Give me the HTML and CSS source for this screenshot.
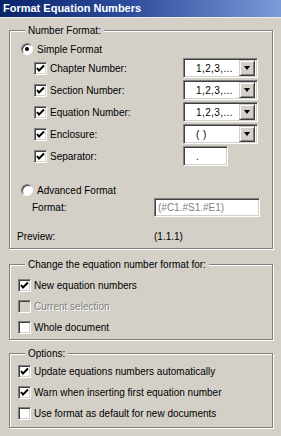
FILE: index.html
```html
<!DOCTYPE html>
<html lang="en">
<head>
    <meta charset="UTF-8">
    <title>Format Equation Numbers</title>
    <link rel="stylesheet" href="styles.css">
</head>
<body>
    <div class="dialog">
        <div class="titlebar">Format Equation Numbers</div>

        <fieldset class="group grp-format">
            <legend>Number Format:</legend>
            <div class="row row-simple">
                <span class="radio on"></span>
                <span class="lbl">Simple Format</span>
            </div>

            <div class="row part">
                <span class="chk"><svg viewBox="0 0 11 11"><polyline points="2,5 4,7.5 9,2.5"/></svg></span>
                <span class="lbl">Chapter Number:</span>
                <div class="combo"><span class="val">1,2,3,...</span><span class="drop"><i></i></span></div>
            </div>
            <div class="row part">
                <span class="chk"><svg viewBox="0 0 11 11"><polyline points="2,5 4,7.5 9,2.5"/></svg></span>
                <span class="lbl">Section Number:</span>
                <div class="combo"><span class="val">1,2,3,...</span><span class="drop"><i></i></span></div>
            </div>
            <div class="row part">
                <span class="chk"><svg viewBox="0 0 11 11"><polyline points="2,5 4,7.5 9,2.5"/></svg></span>
                <span class="lbl">Equation Number:</span>
                <div class="combo"><span class="val">1,2,3,...</span><span class="drop"><i></i></span></div>
            </div>
            <div class="row part">
                <span class="chk"><svg viewBox="0 0 11 11"><polyline points="2,5 4,7.5 9,2.5"/></svg></span>
                <span class="lbl">Enclosure:</span>
                <div class="combo"><span class="val">( )</span><span class="drop"><i></i></span></div>
            </div>
            <div class="row part">
                <span class="chk"><svg viewBox="0 0 11 11"><polyline points="2,5 4,7.5 9,2.5"/></svg></span>
                <span class="lbl">Separator:</span>
                <div class="field sep">.</div>
            </div>

            <div class="row row-adv">
                <span class="radio"></span>
                <span class="lbl">Advanced Format</span>
            </div>
            <div class="row row-fmt">
                <span class="lbl">Format:</span>
                <div class="field adv">(#C1.#S1.#E1)</div>
            </div>
            <div class="row row-prev">
                <span class="lbl">Preview:</span>
                <span class="prev">(1.1.1)</span>
            </div>
        </fieldset>

        <fieldset class="group grp-apply">
            <legend>Change the equation number format for:</legend>
            <div class="row opt">
                <span class="chk"><svg viewBox="0 0 11 11"><polyline points="2,5 4,7.5 9,2.5"/></svg></span>
                <span class="lbl">New equation numbers</span>
            </div>
            <div class="row opt">
                <span class="chk off"></span>
                <span class="lbl dim">Current selection</span>
            </div>
            <div class="row opt">
                <span class="chk"></span>
                <span class="lbl">Whole document</span>
            </div>
        </fieldset>

        <fieldset class="group grp-opts">
            <legend>Options:</legend>
            <div class="row opt">
                <span class="chk"><svg viewBox="0 0 11 11"><polyline points="2,5 4,7.5 9,2.5"/></svg></span>
                <span class="lbl">Update equations numbers automatically</span>
            </div>
            <div class="row opt">
                <span class="chk"><svg viewBox="0 0 11 11"><polyline points="2,5 4,7.5 9,2.5"/></svg></span>
                <span class="lbl">Warn when inserting first equation number</span>
            </div>
            <div class="row opt">
                <span class="chk"></span>
                <span class="lbl">Use format as default for new documents</span>
            </div>
        </fieldset>
    </div>
</body>
</html>
```

FILE: styles.css
```css
*{
    margin: 0;
    padding: 0;
    box-sizing: border-box;
}
body{
    background: #d4d0c8;
    font-family: "Liberation Sans", Arial, sans-serif;
    font-size: 10px;
    color: #000;
}
.dialog{
    width: 281px;
    height: 436px;
    background: #d4d0c8;
}
.titlebar{
    height: 18px;
    line-height: 17px;
    padding-left: 3px;
    color: #fff;
    font-weight: bold;
    font-size: 11px;
    background: linear-gradient(to right, #0a246a, #2c4c9c 45%, #7a9ad8);
    border-bottom: 1px solid #eeece6;
}

/* group boxes */
.group{
    margin: 6px 9px 0 9px;
    width: 264px;
    border: 1px solid #808080;
    box-shadow: 1px 1px 0 #fff, inset 1px 1px 0 #fff;
    padding: 0 0 0 7px;
}
.group legend{
    margin-left: 8px;
    padding: 0 3px;
    line-height: 13px;
    font-size: 10px;
    background: #d4d0c8;
}
.grp-format{
    height: 225px;
    margin-top: 6px;
}
.grp-apply{
    height: 82px;
    margin-top: 9px;
    padding-top: 4px;
}
.grp-opts{
    height: 81px;
    margin-top: 7px;
    padding-top: 1px;
}

.row{
    display: flex;
    align-items: center;
}
.row-simple{
    height: 18px;
    margin-top: 3px;
    padding-left: 4px;
}
.part{
    height: 20px;
    margin-top: 2px;
    padding-left: 17px;
}
.row-simple + .part{
    margin-top: 0;
}
.part .lbl{
    width: 133px;
}
.row-adv{
    height: 14px;
    margin-top: 17px;
    padding-left: 4px;
}
.row-fmt{
    height: 19px;
    margin-top: 1px;
    padding-left: 15px;
}
.row-fmt .lbl{
    width: 122px;
}
.row-prev{
    height: 14px;
    margin-top: 12px;
}
.row-prev .lbl{
    width: 137px;
}
.opt{
    height: 21px;
    padding-left: 1px;
}

/* controls */
.radio{
    width: 12px;
    height: 12px;
    border-radius: 50%;
    background: #fff;
    border: 1px solid;
    border-color: #808080 #fff #fff #808080;
    box-shadow: inset 1px 1px 0 #404040;
    margin-right: 4px;
    display: flex;
    align-items: center;
    justify-content: center;
}
.radio.on::after{
    content: "";
    width: 4px;
    height: 4px;
    border-radius: 50%;
    background: #000;
}
.chk{
    width: 13px;
    height: 13px;
    flex: none;
    background: #fff;
    border: 1px solid;
    border-color: #808080 #fff #fff #808080;
    box-shadow: inset 1px 1px 0 #404040, inset -1px -1px 0 #d4d0c8;
    margin-right: 3px;
}
.chk.off{
    background: #d4d0c8;
}
.chk svg{
    display: block;
    width: 11px;
    height: 11px;
    fill: none;
    stroke: #000;
    stroke-width: 2;
}
.dim{
    color: #808080;
    text-shadow: 1px 1px 0 #fff;
}
.combo, .field{
    height: 20px;
    background: #fff;
    border: 1px solid;
    border-color: #808080 #fff #fff #808080;
    box-shadow: inset 1px 1px 0 #404040, inset -1px -1px 0 #d4d0c8;
    display: flex;
    align-items: center;
}
.combo{
    width: 75px;
    padding: 2px;
}
.combo .val{
    flex: 1;
    padding-left: 10px;
    letter-spacing: 0.4px;
}
.drop{
    width: 16px;
    height: 16px;
    background: #d4d0c8;
    border: 1px solid;
    border-color: #d4d0c8 #404040 #404040 #d4d0c8;
    box-shadow: inset 1px 1px 0 #fff, inset -1px -1px 0 #808080;
    display: flex;
    align-items: center;
    justify-content: center;
}
.drop i{
    width: 0;
    height: 0;
    border-left: 3.5px solid transparent;
    border-right: 3.5px solid transparent;
    border-top: 4px solid #000;
}
.sep{
    width: 45px;
    padding-left: 12px;
}
.adv{
    width: 106px;
    height: 19px;
    padding-left: 3px;
    color: #808080;
}
```
